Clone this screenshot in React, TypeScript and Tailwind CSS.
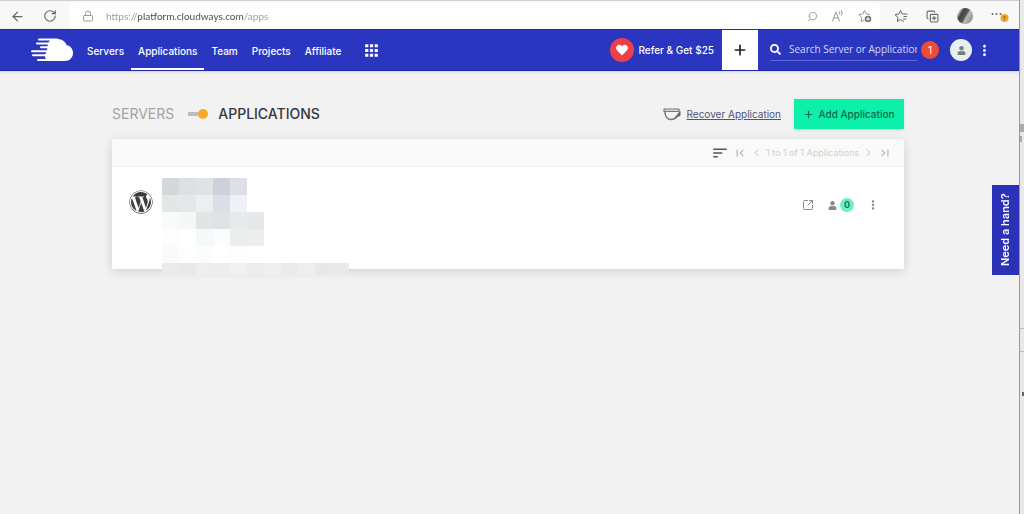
import React from 'react';
import {
  ArrowLeft,
  RotateCw,
  Lock,
  Search,
  ChevronLeft,
  ChevronRight,
  Plus,
  CopyPlus,
  SquareArrowOutUpRight,
} from 'lucide-react';
import { FaWordpress, FaSearch, FaUser, FaHeart } from 'react-icons/fa';
import { MdApps, MdMoreVert, MdSort, MdFirstPage, MdLastPage } from 'react-icons/md';

const navLinks = [
  { label: 'Servers', active: false },
  { label: 'Applications', active: true },
  { label: 'Team', active: false },
  { label: 'Projects', active: false },
  { label: 'Affiliate', active: false },
];

// Colours of the blurred out application details, row by row
const mosaic = [
  ['#d3d9da', '#dce0e2', '#e0e3e6', '#cfd0dc', '#dce0e6', '#ffffff', '#ffffff', '#ffffff', '#ffffff', '#ffffff', '#ffffff'],
  ['#e3e7e6', '#e4e8e8', '#eceef0', '#dcdde6', '#eff1f6', '#ffffff', '#ffffff', '#ffffff', '#ffffff', '#ffffff', '#ffffff'],
  ['#f8fbfa', '#f5f8f7', '#e2e5e6', '#e0e2e6', '#e6eaea', '#e6e9e9', '#ffffff', '#ffffff', '#ffffff', '#ffffff', '#ffffff'],
  ['#fdfdfd', '#ffffff', '#f5f9f9', '#f9fdfd', '#eaeeed', '#eceeee', '#ffffff', '#ffffff', '#ffffff', '#ffffff', '#ffffff'],
  ['#fbfafa', '#fefefe', '#fbfcfc', '#ffffff', '#fdfdfd', '#ffffff', '#ffffff', '#ffffff', '#ffffff', '#ffffff', '#ffffff'],
  ['#ebebeb', '#e9e9e9', '#eeeeee', '#ededed', '#f1f1f1', '#ececec', '#efefef', '#ebebeb', '#eeeeee', '#e8e8e8', '#e9e9e9'],
];

const CloudLogo = () => (
  <svg viewBox="0 0 42 24" className="h-6 w-[42px]" aria-label="Cloudways">
    <path
      d="M22 1h4c4.500 0 8 2 9.500 6 4 .8 6.500 4 6.500 8 0 4.700-3.500 8-8 8H19c-3 0-5-2-5-5 0-2 .8-3.500 2.200-4.600C16 9 17 1 22 1z"
      fill="#fff"
    />
    <path
      d="M8 1.500h18M6 5.500h14M10 9.300h10M1 13.200h16M2 17.300h16M7 22h16"
      fill="none"
      stroke="#fff"
      strokeWidth="2"
      strokeLinecap="round"
    />
  </svg>
);

const ReadAloudIcon = () => (
  <svg viewBox="0 0 14 14" className="h-3.5 w-3.5" fill="none" stroke="currentColor" strokeLinecap="round">
    <path d="M1.500 12 5 3l3.500 9M2.800 9h4.400" />
    <path d="M8.500 2.500q.9 1.300 0 2.600M10.500 1.300q1.700 2.500 0 5" />
  </svg>
);

const StarAddIcon = () => (
  <svg viewBox="0 0 14 14" className="h-3.5 w-3.5" fill="none" stroke="currentColor" strokeLinejoin="round">
    <path d="M6.500 11 3 12.500l.7-4L1 5.600l3.800-.6L6.500 1.500 8.200 5l3.800.6" />
    <circle cx="10" cy="10" r="3.300" fill="#777" stroke="none" />
    <path d="M10 8.300v3.400M8.300 10h3.400" stroke="#fff" />
  </svg>
);

const FavoritesIcon = () => (
  <svg viewBox="0 0 14 14" className="h-3.5 w-3.5" fill="none" stroke="currentColor" strokeLinejoin="round" strokeLinecap="round">
    <path d="M9.500 12.300 6.500 10.600 3.300 12.500l.7-4L1 5.600l3.800-.6L6.500 1.500 8.200 5H13M10 7.500h2.500M9.500 10H12" />
  </svg>
);

const CupIcon = () => (
  <svg viewBox="0 0 18 14" className="h-3.5 w-[18px]" fill="none" stroke="#73787b" strokeLinejoin="round" strokeLinecap="round">
    <path d="M1 2h15v2.500H1z" strokeWidth="1.200" fill="#d5d8d9" />
    <path d="M2 5c0 4.500 2.500 7.500 6 7.500 2.500 0 4.500-1 6-3" strokeWidth="1.500" />
    <path d="M17 5v3.500l-4 1.500z" fill="#5d6467" stroke="#5d6467" />
  </svg>
);

const BrowserBar = () => (
  <div className="border-t border-[#cfcfcf] bg-[#f8f8f8] pt-0.5">
    <div className="flex h-[26px] items-center text-[#666]">
      <div className="flex w-[70px] items-center gap-[18px] pl-2.5">
        <button aria-label="Back">
          <ArrowLeft size={15} strokeWidth={2} />
        </button>
        <button aria-label="Refresh">
          <RotateCw size={14} strokeWidth={2} />
        </button>
      </div>
      <div className="flex h-full min-w-0 flex-1 items-center gap-3 rounded-sm bg-white pr-2 pl-3 text-[#999]">
        <Lock size={12} />
        <input
          aria-label="Address"
          defaultValue="https://platform.cloudways.com/apps"
          className="min-w-0 flex-1 bg-[linear-gradient(90deg,#999_32px,#444_32px,#444_138px,#999_138px)] bg-clip-text font-[Lato,sans-serif] text-[10px] text-transparent outline-none"
        />
        <div className="flex items-center gap-[13px]">
          <button aria-label="Zoom">
            <Search size={11} className="-scale-x-100" />
          </button>
          <button aria-label="Read aloud">
            <ReadAloudIcon />
          </button>
          <button aria-label="Add to favorites">
            <StarAddIcon />
          </button>
        </div>
      </div>
      <div className="flex items-center gap-[18px] pr-2.5 pl-3.5">
        <button aria-label="Favorites">
          <FavoritesIcon />
        </button>
        <button aria-label="Collections">
          <CopyPlus size={13} />
        </button>
        <button
          aria-label="Profile"
          className="h-4 w-4 rounded-full bg-[linear-gradient(120deg,#ddd_15%,#444_30%,#555_50%,#bbb_60%,#777)]"
        />
        <button aria-label="Settings">
          <svg viewBox="0 0 18 14" className="h-3.5 w-[18px]">
            <path d="M1.500 5h.1M5.500 5h.1M9.500 5h.1" stroke="#666" strokeWidth="1.800" strokeLinecap="round" />
            <circle cx="13.500" cy="9" r="4" fill="#eda92b" />
            <path d="M13.500 11v-4M12 8.500l1.500-1.500L15 8.500" stroke="#a87410" fill="none" />
          </svg>
        </button>
      </div>
    </div>
  </div>
);

const NavBar = () => (
  <header className="flex h-[42px] items-stretch border-y border-[#2029a8] bg-[#2b36c0] pl-[31px] text-white shadow-sm">
    <a href="#home" className="flex items-center">
      <CloudLogo />
    </a>
    <nav className="ml-[7px] flex text-[10px] font-medium">
      {navLinks.map((link) => (
        <a
          key={link.label}
          href={`#${link.label.toLowerCase()}`}
          className={
            link.active
              ? 'flex items-center border-b-2 border-white px-[7px] pt-[5px]'
              : 'flex items-center border-b-2 border-transparent px-[7px] pt-[5px]'
          }
        >
          {link.label}
        </a>
      ))}
    </nav>
    <button aria-label="Apps" className="ml-3.5">
      <MdApps size={19} />
    </button>
    <div className="ml-auto flex items-center">
      <a href="#refer" className="flex items-center gap-1 pr-2 text-[10px] font-medium">
        <span className="flex h-6 w-6 items-center justify-center rounded-full bg-[#ee3f46]">
          <FaHeart size={12} />
        </span>
        Refer &amp; Get $25
      </a>
      <button aria-label="Add" className="flex h-full w-9 items-center justify-center bg-white text-[#222]">
        <Plus size={16} strokeWidth={2.5} />
      </button>
      <label className="ml-3 flex h-[22px] w-[147px] items-center gap-2 border-b border-[#5c65d2]">
        <FaSearch size={11} className="shrink-0" />
        <input
          aria-label="Search"
          placeholder="Search Server or Application"
          className="w-full min-w-0 font-['Open_Sans',sans-serif] text-[10px] outline-none placeholder:text-[#d5d8f5]"
        />
      </label>
      <span className="ml-1 flex h-[18px] w-[18px] items-center justify-center rounded-full bg-[#ee4c33] text-[10px]">
        1
      </span>
      <button
        aria-label="Account"
        className="ml-[11px] flex h-[22px] w-[22px] items-center justify-center rounded-full bg-[#e9efee] text-[#75807c]"
      >
        <FaUser size={9} />
      </button>
      <button aria-label="More" className="mr-[26px] ml-1">
        <MdMoreVert size={17} />
      </button>
    </div>
  </header>
);

const ApplicationsCard = () => (
  <section className="bg-white shadow-[0_2px_10px_rgba(0,0,0,0.14)]">
    <div className="flex h-7 items-center justify-end gap-1 border-b border-[#f4f4f4] bg-[#fafafa] pr-3 text-[#b5b5b5]">
      <button aria-label="Sort" className="text-[#555]">
        <MdSort size={18} />
      </button>
      <button aria-label="First page">
        <MdFirstPage size={14} />
      </button>
      <button aria-label="Previous page">
        <ChevronLeft size={11} />
      </button>
      <span className="text-[9px] text-[#cfcfcf]">1 to 1 of 1 Applications</span>
      <button aria-label="Next page">
        <ChevronRight size={11} />
      </button>
      <button aria-label="Last page">
        <MdLastPage size={14} />
      </button>
    </div>
    <div className="flex h-[102px] items-start pt-[11px] pl-[17px]">
      <FaWordpress size={24} className="mt-3 text-[#3a3d40]" />
      <div className="ml-[9px] grid w-[187px] grid-cols-11" aria-hidden="true">
        {mosaic.flat().map((color, index) => (
          <span
            key={index}
            className={index < 55 ? 'h-[17px]' : 'h-3'}
            style={{ backgroundColor: color }}
          />
        ))}
      </div>
      <div className="mt-5 mr-6 ml-auto flex items-center text-[#888]">
        <button aria-label="Open application" className="mr-3.5">
          <SquareArrowOutUpRight size={12} />
        </button>
        <button aria-label="Team members" className="flex items-center gap-[3px]">
          <FaUser size={9} />
          <span className="flex h-3.5 w-3.5 items-center justify-center rounded-full bg-[#6ef0c0] text-[9px] font-bold text-[#14795a]">
            0
          </span>
        </button>
        <button aria-label="More actions" className="ml-3">
          <MdMoreVert size={14} />
        </button>
      </div>
    </div>
  </section>
);

const App = () => {
  return (
    <div className="flex min-h-screen bg-[#f2f2f2] font-[Inter,sans-serif]">
      <div className="relative min-w-0 flex-1">
        <BrowserBar />
        <NavBar />
        <main className="pt-7 pr-[115px] pl-28">
          <div className="mb-2.5 flex items-center">
            <label htmlFor="view" className="text-sm text-[#a3a3a3]">
              SERVERS
            </label>
            <input
              id="view"
              type="checkbox"
              defaultChecked
              className="mr-2.5 ml-3.5 flex h-3 w-5 appearance-none items-center before:h-1 before:flex-1 before:bg-[#bdbdbd] after:h-2.5 after:w-2.5 after:rounded-full after:bg-[#f5a82c]"
            />
            <h1 className="text-sm font-medium text-[#33363f]">APPLICATIONS</h1>
            <a href="#recover" className="ml-auto flex items-center gap-1.5 text-[10px] text-[#4f5378] underline">
              <CupIcon />
              Recover Application
            </a>
            <button className="ml-[13px] flex h-[30px] w-[110px] items-center justify-center gap-1 bg-[#0df0a9] text-[10px] font-medium text-[#12664f] shadow">
              <Plus size={11} strokeWidth={2.5} />
              Add Application
            </button>
          </div>
          <ApplicationsCard />
        </main>
        <button className="absolute top-[185px] right-0 flex h-[90px] w-[27px] rotate-180 items-center justify-center bg-[#2b32b8] text-[11px] font-semibold text-white [writing-mode:vertical-rl]">
          Need a hand?
        </button>
      </div>
      {/* Edge of the window behind */}
      <aside className="w-[5px] border-l border-[#999] bg-[#e9e9e9] pt-[124px]" aria-hidden="true">
        <div className="h-2 bg-[#aaa]" />
        <div className="mt-1 h-1.5 w-0.5 bg-[#aaa]" />
        <div className="mt-[186px] h-6 border-y border-[#bbb]" />
        <div className="mt-10 ml-auto h-1 w-0.5 bg-[#666]" />
      </aside>
    </div>
  );
};

export default App;
